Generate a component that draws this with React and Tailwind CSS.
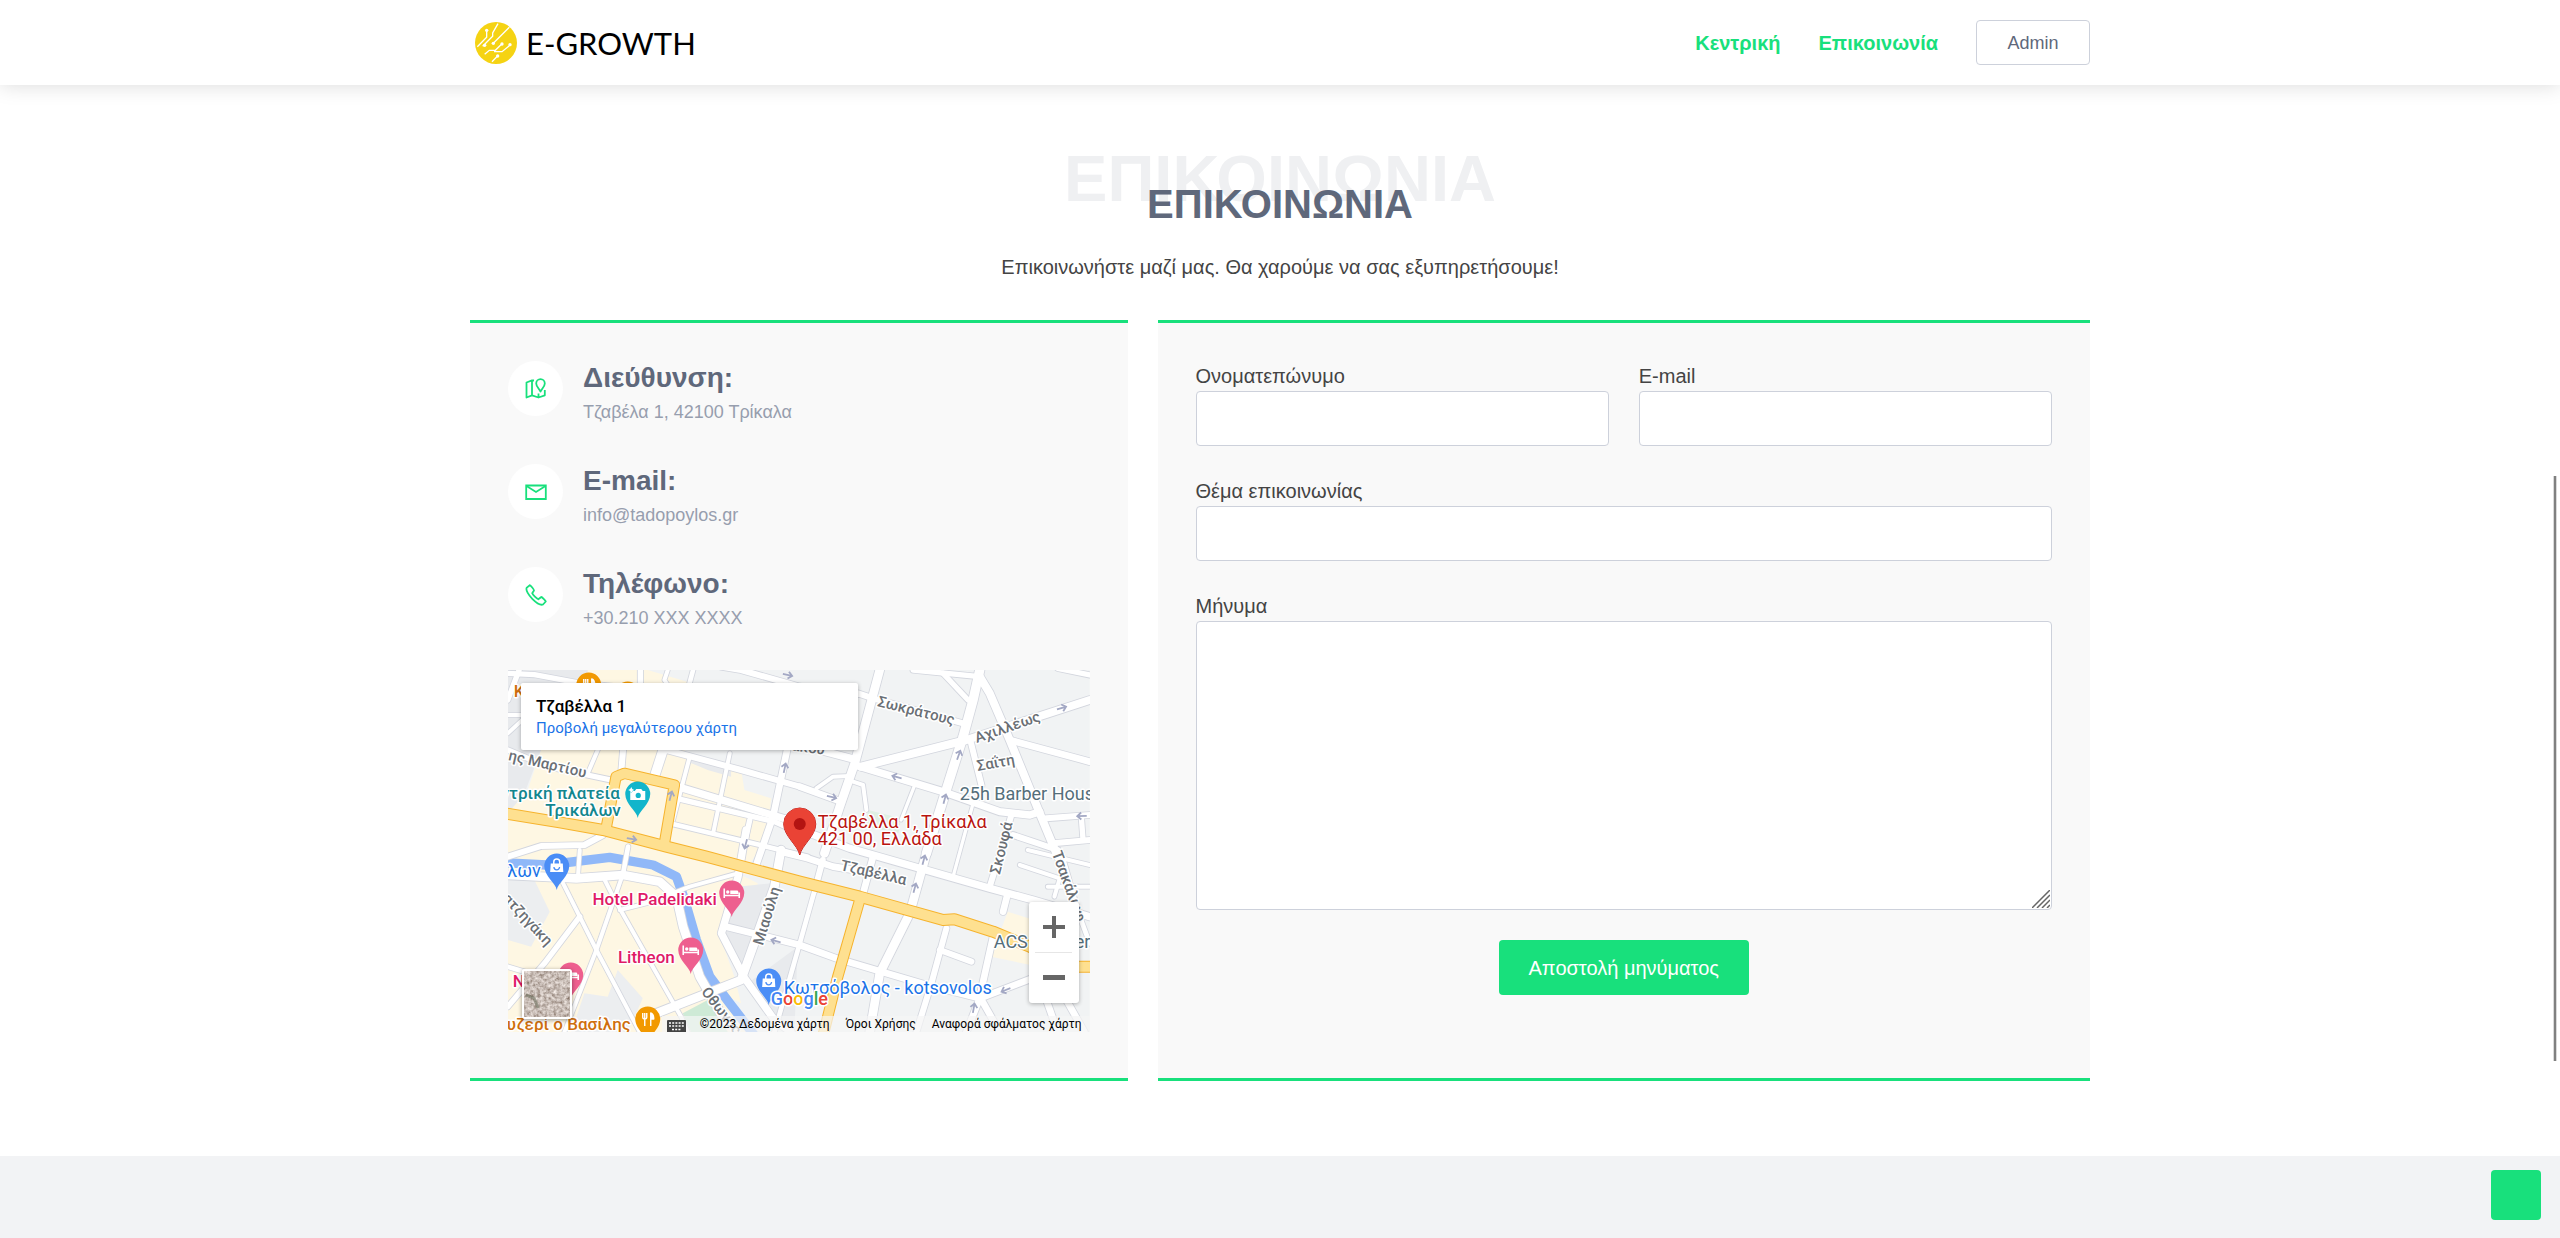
import React from "react";

const roads = [
  [26, "0,615 206,625 346,615 456,635 506,680 526,770 576,920 656,1060"],
  [18, "0,560 100,528 230,525 286,495"],
  [12, "166,640 266,840 396,1086"],
  [12, "291,630 316,680 520,1040 540,1086"],
  [12, "341,625 266,840 170,1086"],
  [16, "216,740 110,880 0,1010"],
  [12, "336,720 416,700 546,650 690,610"],
  [12, "216,540 211,615"],
  [14, "361,530 346,610"],
  [14, "0,890 60,908"],
  [26, "820,540 800,650 700,930 420,1040"],
  [22, "715,480 691,620 641,790 711,925 800,1050 850,1086"],
  [20, "656,770 876,825 986,865 1256,945 1416,985"],
  [14, "921,660 876,820 800,1086"],
  [18, "945,570 921,660"],
  [20, "1096,560 1066,670"],
  [20, "820,545 900,565 976,590 1100,610"],
  [26, "1256,550 1206,730 1116,910 1086,1086"],
  [18, "1316,775 1271,940 1226,1086"],
  [18, "1296,840 1391,875"],
  [20, "1456,800 1416,980 1476,1086"],
  [20, "1600,915 1416,985 1376,1086"],
  [22, "880,480 1026,535 1236,595 1446,655 1576,690 1746,740"],
  [20, "1500,670 1486,725"],
  [18, "1511,435 1480,540 1446,650"],
  [20, "1616,990 1650,1086"],
  [20, "1676,990 1730,1086"],
  [14, "1660,545 1716,740 1746,820"],
  [28, "1416,0 1396,90 1366,200 1306,390 1256,550"],
  [26, "1116,0 1041,280 996,410 950,550"],
  [24, "1060,290 1376,210 1746,90"],
  [22, "1041,285 1306,365 1476,425 1566,435 1596,425"],
  [20, "876,350 1000,395"],
  [24, "1416,20 1446,70 1506,210 1596,430 1650,560"],
  [20, "1506,210 1746,275"],
  [16, "1216,0 1416,20"],
  [16, "1306,10 1381,90"],
  [18, "1051,70 1096,85 1366,160"],
  [18, "1616,445 1746,435"],
  [18, "1636,520 1746,510"],
  [16, "1721,445 1726,510"],
  [18, "1516,495 1650,540"],
  [18, "1390,220 1421,345"],
  [16, "1650,-5 1746,15"],
  [10, "1221,345 1180,450"],
  [10, "1396,400 1336,620"],
  [12, "926,355 976,320 1026,318"],
  [12, "1036,335 1066,345 1076,420"],
  [22, "876,225 1041,268"],
  [22, "510,350 876,460"],
  [16, "506,385 800,455 900,500"],
  [14, "486,460 716,515 900,560"],
  [18, "476,240 700,300 876,350"],
  [28, "466,240 440,320"],
  [18, "346,240 341,300"],
  [20, "840,230 796,440 740,600"],
  [12, "666,250 616,490"],
  [12, "546,260 496,450"],
  [16, "726,450 706,540"],
  [16, "0,240 120,290 310,330"],
  [12, "270,240 240,310"],
  [16, "34,0 0,90"],
  [16, "0,10 80,14 220,40 420,60"],
  [12, "0,135 60,135 0,190"],
  [16, "398,0 398,60"],
  [14, "556,0 540,60"],
  [12, "480,0 470,30 490,60"],
  [18, "640,-10 700,0 876,50 1050,72"],
  [12, "1536,585 1656,625 1640,680"],
  [12, "1560,540 1746,585"],
  [12, "1620,650 1746,650"],
];

const highways = [
  [36, "-10,430 156,457 286,480 476,530 596,560 876,635 1056,680 1306,750 1340,748 1456,785 1566,830 1680,890 1756,890"],
  [34, "296,470 325,320 350,310 500,345 470,520"],
  [34, "1056,690 990,920 946,1096"],
];

const labels = [
  { x: 369, y: 36, r: 14, t: "Σωκράτους" },
  { x: 469, y: 73, r: -19, t: "Αχιλλέως" },
  { x: 470, y: 101, r: -10, t: "Σαΐτη" },
  { x: 0, y: 90, r: 13, t: "ης Μαρτίου" },
  { x: 332, y: 200, r: 13, t: "Τζαβέλλα" },
  { x: 255, y: 276, r: -73, t: "Μιαούλη" },
  { x: 193, y: 322, r: 52, t: "Οθωνος" },
  { x: -6, y: 229, r: 47, t: "ατζηγάκη" },
  { x: 492, y: 205, r: -76, t: "Σκουφά" },
  { x: 544, y: 183, r: 70, t: "Τσακάλωφ" },
  { x: 283, y: 80, r: 8, t: "ακου" },
];

const pins = [
  { x: 81, y: 15, c: "#f29900", k: "food" },
  { x: 120, y: 24, c: "#f29900", k: "food" },
  { x: 130, y: 124, c: "#12b5cb", k: "camera" },
  { x: 49, y: 196, c: "#4a8df6", k: "bag" },
  { x: 224, y: 223, c: "#ee5f8f", k: "bed" },
  { x: 183, y: 280, c: "#ee5f8f", k: "bed" },
  { x: 63, y: 305, c: "#ee5f8f", k: "bed" },
  { x: 261, y: 311, c: "#4a8df6", k: "bag" },
  { x: 140, y: 349, c: "#f29900", k: "food" },
];

const arrows = [
  [554, 38, -17], [451, 85, -70], [389, 107, 195], [437, 129, -75], [324, 127, 14],
  [574, 146, 178], [277, 98, -78], [163, 126, -75], [124, 169, 10], [238, 174, 105],
  [407, 218, -75], [416, 190, -75], [498, 320, 158], [466, 338, -80], [268, 271, 195], [280, 5, 12],
];

function PinGlyph({ kind }) {
  if (kind === "bed")
    return (
      <g stroke="#fff" fill="none" strokeWidth="1.6">
        <path d="M-7.5 -4.5V5M7.5 -0.5V5M-7.5 2.5H7.5" />
        <path d="M-1.5 1V-2.5H5.5Q6.8 -2.5 6.8 1Z" fill="#fff" stroke="none" />
        <circle cx="-4" cy="-1" r="1.7" fill="#fff" stroke="none" />
      </g>
    );
  if (kind === "bag")
    return (
      <g>
        <path d="M-3 -2V-4a3 3 0 0 1 6 0V-2" fill="none" stroke="#fff" strokeWidth="1.5" />
        <path d="M-6 -2.5H6L6.6 6H-6.6Z" fill="#fff" />
        <path d="M-2.8 1a2.8 2.8 0 0 0 5.6 0" fill="none" stroke="#4a8df6" strokeWidth="1.3" />
      </g>
    );
  if (kind === "camera")
    return (
      <g>
        <path d="M-7.5 -3H-3L-1.5 -5H3.5L5 -3H7.5V6H-7.5Z" fill="#fff" />
        <circle cx="0.5" cy="1.4" r="2.6" fill="#12b5cb" />
        <path d="M-6.5 -7l1 2 2 1-2 1-1 2-1-2-2-1 2-1z" fill="#fff" stroke="#12b5cb" strokeWidth="0.5" />
      </g>
    );
  return (
    <g stroke="#fff" fill="none" strokeWidth="1.4">
      <path d="M-5 -6V-2Q-5 0 -3 0T-1 -2V-6M-3 -6V7" />
      <path d="M3 7V-6Q6 -5 6 0H3" fill="#fff" />
    </g>
  );
}

function MapDrawing() {
  return (
    <svg
      viewBox="0 0 582 362"
      preserveAspectRatio="xMidYMid slice"
      className="block h-full w-full"
      role="img"
      aria-label="Χάρτης, Τζαβέλλα 1, Τρίκαλα"
    >
      <defs>
        <filter id="aerial" x="0" y="0" width="100%" height="100%">
          <feTurbulence type="fractalNoise" baseFrequency="0.3" numOctaves="3" seed="8" />
          <feColorMatrix values="0.9 0 0 0 0.13  0.9 0 0 0 0.06  0.9 0 0 0 0.02  0 0 0 0 1" />
        </filter>
      </defs>
      <rect width="582" height="362" fill="#f1f3f4" />
      <g transform="scale(0.33333)">
        <path d="M0 0H300L420 40V240H100L0 500Z" fill="#e8eaed" />
        <path d="M240 0H420L620 60V240H240Z" fill="#fef7e3" />
        <path d="M100 240H530L550 280 700 300 710 360 790 385 780 500 720 590 900 640 690 610 750 640 745 670 690 660 630 780 680 920 700 1000 620 960 740 1086H0V430L60 360Z" fill="#fef7e3" />
        <path d="M530 255L670 290V320L600 300 540 275Z" fill="#e8eaed" />
        <path d="M0 620L80 630 126 725 70 830 0 810Z" fill="#eceef0" />
        <path d="M330 900L405 985 360 1086 190 1086 230 970 300 980Z" fill="#eceef0" />
        <path d="M690 650L790 640 700 930 650 790Z" fill="#e8eaed" />
        <path d="M720 940L870 830 860 1086 790 1040Z" fill="#e8eaed" />
        <path d="M1500 725L1640 770V900L1450 860Z" fill="#fef7e3" />
        <path d="M1080 420L1180 445 1172 490 1075 470Z" fill="#dff0e4" />
        <path d="M525 1030L600 990 660 1086H550Z" fill="#ceead6" />
        <g fill="none" strokeLinejoin="round" strokeLinecap="round">
          <polyline points="-10,578 116,585 306,562 436,585 506,620 531,690 566,810 606,920 666,1000 740,1096" stroke="#90b8f8" strokeWidth="28" />
          {roads.map(([w, p], i) => (
            <polyline key={i} points={p} stroke="#d3d6de" strokeWidth={w + 5} />
          ))}
          {roads.map(([w, p], i) => (
            <polyline key={i} points={p} stroke="#ffffff" strokeWidth={w} />
          ))}
          {highways.map(([w, p], i) => (
            <polyline key={i} points={p} stroke="#f6b32d" strokeWidth={w} />
          ))}
          {highways.map(([w, p], i) => (
            <polyline key={i} points={p} stroke="#fee090" strokeWidth={w - 6} />
          ))}
        </g>
      </g>
      <g stroke="#a3a8c4" strokeWidth="1.8" fill="none">
        {arrows.map(([x, y, r], i) => (
          <path key={i} d="M-5 0H4M0.5 -3.5L4.5 0L0.5 3.5" transform={`translate(${x} ${y}) rotate(${r})`} />
        ))}
      </g>
      <g className="font-['Roboto',sans-serif]" stroke="#fff" strokeWidth="3" strokeLinejoin="round" paintOrder="stroke">
        <g className="text-[15px] font-medium" fill="#6a6f75">
          {labels.map((l) => (
            <text key={l.t} transform={`translate(${l.x} ${l.y}) rotate(${l.r})`}>{l.t}</text>
          ))}
        </g>
        {pins.map((p, i) => (
          <g key={i} transform={`translate(${p.x} ${p.y})`} stroke="none">
            <path d="M0 24C-1 17 -12.500 10 -12.500 0A12.500 12.500 0 0 1 12.500 0C12.500 10 1 17 0 24Z" fill={p.c} />
            <PinGlyph kind={p.k} />
          </g>
        ))}
        <path d="M292 185C290 175 276 166 276 154A16 16 0 0 1 308 154C308 166 294 175 292 185Z" fill="#ea4335" stroke="#b31412" strokeWidth="1" />
        <circle cx="292" cy="154" r="6" fill="#b31412" stroke="none" />
        <g className="text-[18px]">
          <text x="310" y="158" fill="#b9140f">Τζαβέλλα 1, Τρίκαλα</text>
          <text x="310" y="175" fill="#b9140f">421 00, Ελλάδα</text>
          <text x="452" y="130" fill="#546e7a">25h Barber House</text>
          <text x="486" y="278" fill="#546e7a">ACS Courier</text>
          <text x="276" y="324" fill="#1a73e8">Κωτσόβολος - kotsovolos</text>
          <text x="33" y="207" fill="#1a73e8" textAnchor="end">άλων</text>
        </g>
        <g className="text-[17px] font-medium">
          <text x="112" y="129" fill="#12868e" textAnchor="end">Κεντρική πλατεία</text>
          <text x="113" y="146" fill="#12868e" textAnchor="end">Τρικάλων</text>
          <text x="209" y="235" fill="#e01a67" textAnchor="end">Hotel Padelidaki</text>
          <text x="167" y="293" fill="#e01a67" textAnchor="end">Litheon</text>
          <text x="5" y="317" fill="#e01a67">N</text>
          <text x="123" y="360" fill="#cf6f0e" textAnchor="end">ουζερί ο Βασίλης</text>
          <text x="6" y="27" fill="#cf6f0e">K</text>
        </g>
        <text x="263" y="335" className="text-[18px] font-medium">
          <tspan fill="#4285f4">G</tspan>
          <tspan fill="#ea4335">o</tspan>
          <tspan fill="#fbbc04">o</tspan>
          <tspan fill="#4285f4">g</tspan>
          <tspan fill="#34a853">l</tspan>
          <tspan fill="#ea4335">e</tspan>
        </text>
      </g>
    </svg>
  );
}

function MapPanel() {
  return (
    <div className="relative mb-2 h-[362px] w-full overflow-hidden font-['Roboto',sans-serif]">
      <MapDrawing />
      <div className="absolute top-[13px] left-[13px] h-[67px] w-[337px] rounded-[2px] bg-white px-[15px] pt-3 shadow-[0_1px_4px_rgba(0,0,0,0.3)]">
        <div className="text-[17px] leading-[22px] font-medium text-black">Τζαβέλλα 1</div>
        <a href="#map" className="block text-[15px] leading-[22px] text-[#1a73e8]">Προβολή μεγαλύτερου χάρτη</a>
      </div>
      <div className="absolute right-[11px] bottom-[29px] flex w-[50px] flex-col items-center rounded-[3px] bg-white shadow-[0_1px_4px_rgba(0,0,0,0.3)]">
        <button type="button" aria-label="Μεγέθυνση" className="flex h-[50px] w-full items-center justify-center">
          <svg width="22" height="22" viewBox="0 0 22 22" fill="#666"><path d="M9 0h4v9h9v4h-9v9H9v-9H0V9h9z" /></svg>
        </button>
        <div className="h-px w-[37px] bg-[#e6e6e6]" />
        <button type="button" aria-label="Σμίκρυνση" className="flex h-[50px] w-full items-center justify-center">
          <svg width="22" height="22" viewBox="0 0 22 22" fill="#666"><path d="M0 8h22v5H0z" /></svg>
        </button>
      </div>
      <button type="button" aria-label="Δορυφόρος" className="absolute bottom-[13px] left-[14px] h-[50px] w-[50px] rounded-[3px] border-2 border-white shadow-[0_1px_4px_rgba(0,0,0,0.4)]">
        <svg className="block h-full w-full" viewBox="0 0 46 46">
          <rect width="46" height="46" fill="#9a877c" filter="url(#aerial)" />
          <path d="M2 24l8 3 4 10" stroke="#5e6350" strokeWidth="3" fill="none" opacity="0.5" />
        </svg>
      </button>
      <div className="absolute right-0 bottom-0 flex h-4 items-center text-[12px] leading-4 text-black">
        <span className="flex h-4 w-[30px] items-end justify-center bg-[#f5f5f5]/70">
          <svg width="19" height="12" viewBox="0 0 19 12">
            <rect width="19" height="14" rx="1" fill="#444" />
            <path d="M2 3h15M2 6h15M5 9.500h9" stroke="#fff" strokeWidth="1.5" strokeDasharray="2 1.200" />
          </svg>
        </span>
        <span className="bg-[#f5f5f5]/70 px-2">©2023 Δεδομένα χάρτη</span>
        <a href="#terms" className="bg-[#f5f5f5]/70 px-2">Όροι Χρήσης</a>
        <a href="#report" className="bg-[#f5f5f5]/70 px-2">Αναφορά σφάλματος χάρτη</a>
      </div>
    </div>
  );
}

function MapIcon() {
  return (
    <svg width="22" height="22" viewBox="0 0 22 22" fill="none" stroke="#18e07c" strokeWidth="1.8" strokeLinejoin="round" aria-hidden="true">
      <path d="M9 2.500L7 2.300 1.500 4.500V19.500L7 17.300 13.500 19.500 19.800 17.300V12M7 2.300V17.300M13.500 15.500V19.500" />
      <path d="M15.500 13.500C14 10.500 11.200 8.500 11.200 5.500A4.300 4.300 0 0 1 19.800 5.500C19.800 8.500 17 10.500 15.500 13.500Z" />
    </svg>
  );
}

function MailIcon() {
  return (
    <svg width="22" height="22" viewBox="0 0 22 22" fill="none" stroke="#18e07c" strokeWidth="1.800" aria-hidden="true">
      <path d="M1.200 4.500H20.800V18H1.200Z" />
      <path d="M1.500 5L11 11 20.500 5" />
    </svg>
  );
}

function PhoneIcon() {
  return (
    <svg width="22" height="22" viewBox="0 0 22 22" fill="none" stroke="#18e07c" strokeWidth="1.800" strokeLinejoin="round" aria-hidden="true">
      <path d="M4.800 1.200L1.800 3.600C0.200 6 4 11.500 7.300 14.800C10.500 18 15.500 21.500 18 20.500L20.800 17.500C21 17 17 13 16.300 13L13.300 15.300C11.500 14.500 8 11 7.200 9.200L9 6.500C9.200 5.700 5.500 1 4.800 1.200Z" />
    </svg>
  );
}

const contacts = [
  { icon: MapIcon, title: "Διεύθυνση:", text: "Τζαβέλα 1, 42100 Τρίκαλα" },
  { icon: MailIcon, title: "E-mail:", text: "info@tadopoylos.gr" },
  { icon: PhoneIcon, title: "Τηλέφωνο:", text: "+30.210 XXX XXXX" },
];

function Logo() {
  return (
    <a href="#home" className="flex items-center gap-2 pl-1" aria-label="E-GROWTH">
      <svg width="44" height="44" viewBox="0 0 132 132">
        <circle cx="66" cy="66" r="63" fill="#f5d313" />
        <g stroke="#fff" strokeWidth="4" fill="none">
          <path d="M10 77L38 49V30M26 76L56 46V36L72 8M58 67L106 19M32 100L46 88H64L84 68M60 92H84L106 74M54 122L70 106" />
        </g>
        <g fill="#fff">
          <circle cx="38" cy="28" r="5" /><circle cx="32" cy="73" r="5" /><circle cx="58" cy="67" r="5" />
          <circle cx="84" cy="69" r="5" /><circle cx="108" cy="71" r="5" /><circle cx="71" cy="105" r="5" />
        </g>
      </svg>
      <span className="font-['Lato',sans-serif] text-[31px] leading-[44px] text-black">E-GROWTH</span>
    </a>
  );
}

const fieldClass = "block h-[55px] w-full rounded-[4px] border border-[#cdd1db] bg-white px-4 text-[20px]";

export default function App() {
  return (
    <div className="relative flex min-h-screen flex-col overflow-hidden bg-white font-['Liberation_Sans',Arial,sans-serif] text-[20px] leading-[30px] text-[#444444]">
      <header className="bg-white shadow-[0_0_20px_rgba(0,0,0,0.15)]">
        <div className="mx-auto flex h-[85px] max-w-[1620px] items-center justify-between">
          <Logo />
          <nav className="flex items-center gap-[38px]">
            <a href="#home" className="font-bold text-[#18e07c]">Κεντρική</a>
            <a href="#contact" className="font-bold text-[#18e07c]">Επικοινωνία</a>
            <a href="#admin" className="flex h-[45px] w-[114px] items-center justify-center rounded-[4px] border border-[#cdd1db] text-[18px] text-[#5f687b]">Admin</a>
          </nav>
        </div>
      </header>

      <main id="contact" className="mx-auto w-full max-w-[1620px] pb-[75px]">
        <div className="pt-[60px] text-center">
          <div aria-hidden="true" className="h-[40px] text-[65px] leading-[68px] font-bold text-[#eff0f2]">ΕΠΙΚΟΙΝΩΝΙΑ</div>
          <h2 className="relative text-[40px] leading-[38px] font-bold text-[#5f687b]">ΕΠΙΚΟΙΝΩΝΙΑ</h2>
          <p className="mt-[29px] mb-[38px]">Επικοινωνήστε μαζί μας. Θα χαρούμε να σας εξυπηρετήσουμε!</p>
        </div>

        <div className="-mx-[15px] flex">
          <div className="flex w-5/12 px-[15px]">
            <section className="w-full border-y-3 border-[#18e07c] bg-[#f9f9f9] p-[38px]">
              {contacts.map(({ icon: Icon, title, text }) => (
                <div key={title} className="flex h-[103px] gap-5">
                  <div className="flex h-[55px] w-[55px] shrink-0 items-center justify-center rounded-full bg-white">
                    <Icon />
                  </div>
                  <div>
                    <h4 className="text-[28px] leading-[34px] font-bold text-[#5f687b]">{title}</h4>
                    <p className="mt-1 text-[18px] leading-[27px] text-[#979eae]">{text}</p>
                  </div>
                </div>
              ))}
              <MapPanel />
            </section>
          </div>

          <div className="flex w-7/12 px-[15px]">
            <form className="flex w-full flex-col gap-[30px] border-y-3 border-[#18e07c] bg-[#f9f9f9] p-[38px]" onSubmit={(e) => e.preventDefault()}>
              <div className="grid grid-cols-2 gap-[30px]">
                <div>
                  <label htmlFor="name" className="block">Ονοματεπώνυμο</label>
                  <input id="name" type="text" className={fieldClass} />
                </div>
                <div>
                  <label htmlFor="email" className="block">E-mail</label>
                  <input id="email" type="email" className={fieldClass} />
                </div>
              </div>
              <div>
                <label htmlFor="subject" className="block">Θέμα επικοινωνίας</label>
                <input id="subject" type="text" className={fieldClass} />
              </div>
              <div>
                <label htmlFor="message" className="block">Μήνυμα</label>
                <div className="relative">
                  <textarea id="message" className="block h-[289px] w-full resize-y rounded-[4px] border border-[#cdd1db] bg-white px-4 py-3 [&::-webkit-resizer]:bg-transparent" />
                  <svg className="pointer-events-none absolute right-[2px] bottom-[2px]" width="18" height="18" viewBox="0 0 18 18" stroke="#666" strokeWidth="1.500" aria-hidden="true">
                    <path d="M0 18L18 0M5 18L18 5M10 18L18 10M15 18L18 15" />
                  </svg>
                </div>
              </div>
              <button type="submit" className="h-[55px] w-[250px] self-center rounded-[4px] bg-[#18e07c] text-white">Αποστολή μηνύματος</button>
            </form>
          </div>
        </div>
      </main>

      <footer className="min-h-[82px] grow bg-[#f2f3f5]" />
      <button type="button" aria-label="Επιστροφή στην κορυφή" className="absolute right-[19px] bottom-[18px] h-[50px] w-[50px] rounded-[4px] bg-[#18e07c]" />
      <div aria-hidden="true" className="absolute right-[3px] bottom-[177px] h-[585px] w-1 border-x border-[#d9d9d9] bg-[#808080]" />
    </div>
  );
}
